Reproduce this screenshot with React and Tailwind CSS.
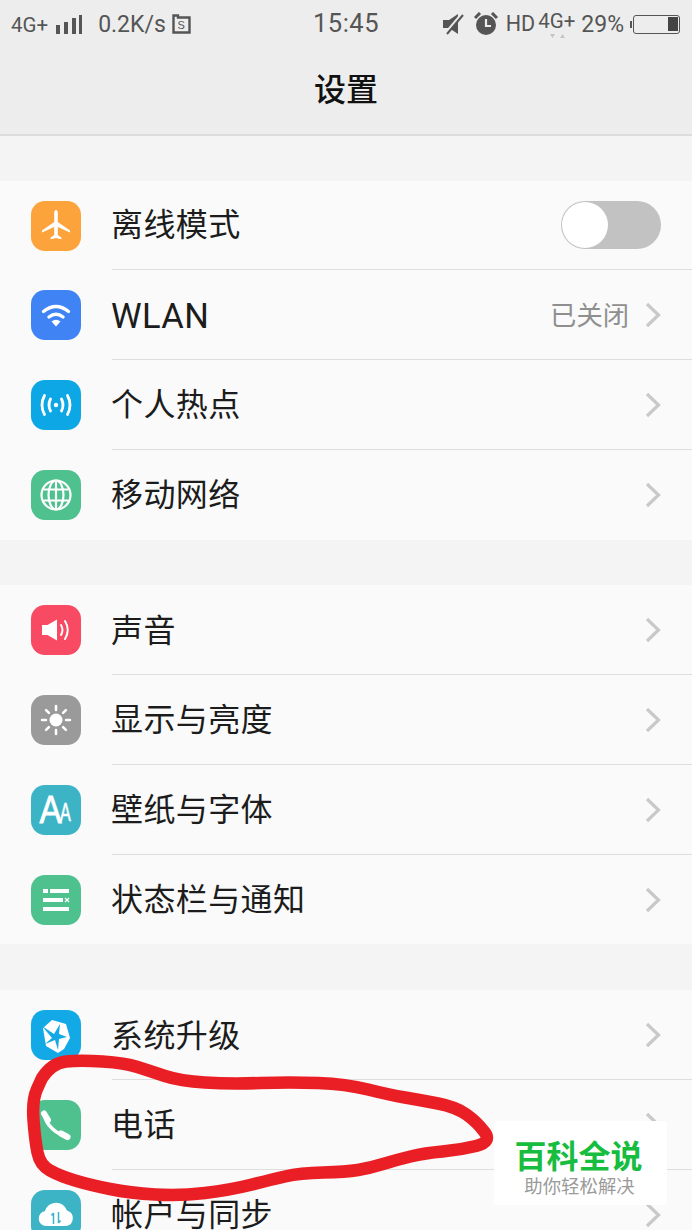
const font = { fontFamily: '"Noto Sans CJK SC", "Noto Sans", sans-serif' };

const Tile = ({ bg, children }) => (
  <div className={`w-[50px] h-[50px] rounded-[14px] shrink-0 ${bg}`}>
    <svg viewBox="0 0 50 50" width="50" height="50" className="block">{children}</svg>
  </div>
);

const Plane = () => (
  <Tile bg="bg-[#fda33b]">
    <path fill="#fff" d="M25 9c-1.200 0-1.800 1.600-1.800 3V21L11 29.500v2l12.200-5.500V34l-3.700 2.800v1.400L25 37l5.500 1.200v-1.400L26.800 34v-8L39 31.500v-2L26.800 21v-9c0-1.400-.6-3-1.800-3z" />
  </Tile>
);
const Wifi = () => (
  <Tile bg="bg-[#3f83f5]">
    <g fill="none" stroke="#fff" strokeWidth="3.400" strokeLinecap="round">
      <path d="M12.500 21.500Q25 11.500 37.500 21.500" />
      <path d="M18 27Q25 21.500 32 27" />
    </g>
    <path fill="#fff" d="M20.500 31.500Q25 28 29.500 31.500L25 36.500z" />
  </Tile>
);
const Hotspot = () => (
  <Tile bg="bg-[#0ea7e6]">
    <circle cx="25" cy="25" r="2.200" fill="#fff" />
    <g fill="none" stroke="#fff" strokeWidth="2.800" strokeLinecap="round">
      <path d="M19.500 19Q16.500 25 19.500 31" />
      <path d="M30.500 19Q33.500 25 30.500 31" />
      <path d="M13.500 15.500Q8.500 25 13.500 34.500" />
      <path d="M36.500 15.500Q41.500 25 36.500 34.500" />
    </g>
  </Tile>
);
const Globe = () => (
  <Tile bg="bg-[#4fc18e]">
    <g fill="none" stroke="#fff" strokeWidth="2.200">
      <circle cx="25" cy="25" r="14.500" />
      <ellipse cx="25" cy="25" rx="7.500" ry="14.500" />
      <path d="M25 10.500V39.500M12.500 19.500H37.500M12.500 30.500H37.500" />
    </g>
  </Tile>
);
const Sound = () => (
  <Tile bg="bg-[#f84a62]">
    <path fill="#fff" d="M11 20h5.500L26 14.500v21L16.500 30H11z" />
    <g fill="none" stroke="#fff" strokeWidth="2" strokeLinecap="round">
      <path d="M30 20Q33 25 30 30" />
      <path d="M34 16Q39.500 25 34 34" />
    </g>
  </Tile>
);
const Sun = () => (
  <Tile bg="bg-[#9a9a9a]">
    <circle cx="25" cy="25" r="6.500" fill="#fff" />
    <g stroke="#fff" strokeWidth="2.500" strokeLinecap="round">
      <path d="M25 11v4M25 35v4M11 25h4M35 25h4M15.100 15.100l2.800 2.800M32.100 32.100l2.800 2.800M15.100 34.900l2.800-2.800M32.100 17.900l2.800-2.800" />
    </g>
  </Tile>
);
const Fonts = () => (
  <Tile bg="bg-[#3cb4c6]">
    <text transform="translate(8.500 38) scale(0.85 1)" fill="#fff" stroke="#fff" strokeWidth="0.800" fontSize="39" fontFamily="Liberation Sans, sans-serif">A</text>
    <text transform="translate(29 36) scale(0.62 1)" fill="#fff" stroke="#fff" strokeWidth="0.600" fontSize="26" fontFamily="Liberation Sans, sans-serif">A</text>
  </Tile>
);
const Notify = () => (
  <Tile bg="bg-[#4fc18e]">
    <g fill="#fff">
      <rect x="12" y="14" width="5" height="4" />
      <rect x="19" y="14" width="19" height="4" />
      <rect x="12" y="23" width="20" height="4" />
      <rect x="12" y="32" width="26" height="4" />
    </g>
    <path d="M34 23l4 4M38 23l-4 4" stroke="#fff" strokeWidth="1.300" />
  </Tile>
);
const Upgrade = () => (
  <Tile bg="bg-[#13a9e6]">
    <path fill="#fff" d="M21 10l14 4 4 14-6 11-6 4-12-7-3-18z" strokeLinejoin="round" />
    <path fill="#13a9e6" d="M29 14l-1 10 8 3-8 2-1 11-3-10-10 4 7-6-10-12 12 8z" />
  </Tile>
);
const Phone = () => (
  <Tile bg="bg-[#4fc18e]">
    <path d="M13.500 15C15 25 25 34 35.500 36.500" fill="none" stroke="#fff" strokeWidth="3.500" strokeLinecap="round" />
    <path d="M13 13.500L17 20" stroke="#fff" strokeWidth="6" strokeLinecap="round" />
    <path d="M30 33.500L36.500 37" stroke="#fff" strokeWidth="6" strokeLinecap="round" />
  </Tile>
);
const Cloud = () => (
  <Tile bg="bg-[#3cb4c6]">
    <path fill="#fff" d="M15 36a7.500 7.500 0 0 1-1-14.900A11.500 11.500 0 0 1 36 20.500 8 8 0 0 1 35.500 36z" />
    <path d="M22.500 34V23M22.500 23l-2 2.500M27.500 22v11M27.500 33l2-2.500" stroke="#3cb4c6" strokeWidth="1.500" fill="none" />
  </Tile>
);

const Chevron = () => (
  <svg width="18" height="28" viewBox="0 0 18 28" className="block shrink-0">
    <path d="M3 3L14.500 14 3 25" fill="none" stroke="#c9c9c9" strokeWidth="3.200" />
  </svg>
);

const Row = ({ icon, label, last, right, h = 'h-[90px]', lift = 'mt-[-5px]' }) => (
  <div className={`flex items-center pl-[31px] ${h}`}>
    {icon}
    <div className={`ml-[31px] flex-1 h-full flex items-center pr-[30px] ${last ? '' : 'border-b border-[#dedede]'}`}>
      <span className={`flex-1 text-[32px] leading-none text-[#1c1c1c] tracking-[0.4px] ml-[-1px] ${lift}`}>{label}</span>
      {right ?? <Chevron />}
    </div>
  </div>
);

const Toggle = () => (
  <div className="w-[100px] h-[48px] mr-px rounded-full bg-[#c2c2c2] flex items-center">
    <div className="w-[46px] h-[46px] ml-px rounded-full bg-white" />
  </div>
);

const Section = ({ children }) => <div className="bg-[#fafafa] flex flex-col">{children}</div>;

const StatusBar = () => (
  <div className="grid grid-cols-[1fr_auto_1fr] items-center h-[48px] text-[#555]" style={{ fontFamily: 'Roboto, sans-serif' }}>
    <div className="flex items-center pl-[11px]">
      <span className="text-[20.500px] leading-none mt-[3px]">4G+</span>
      <svg width="28" height="20" viewBox="0 0 28 20" className="ml-[7px]">
        <path fill="#555" d="M1 11h4v9H1zM9 8h4v12H9zM17 4h4v16h-4zM24 1h3v19h-3z" />
      </svg>
      <span className="text-[23px] leading-none ml-[15px]">0.2K/s</span>
      <svg width="19" height="20" viewBox="0 0 19 20" className="ml-[6px] mb-[1px]">
        <path d="M1.500 1.500H6V3.500H17.500V18.500H1.500z" fill="none" stroke="#555" strokeWidth="2.400" />
        <text x="5.500" y="14.500" fontSize="11" fill="#555" fontFamily="Liberation Sans, sans-serif">S</text>
      </svg>
    </div>
    <span className="text-[25.500px] leading-none tracking-[0.500px]">15:45</span>
    <div className="flex items-center justify-end pr-[12px]">
      <svg width="22" height="22" viewBox="0 0 22 22" className="mr-[10px]">
        <path fill="#555" d="M1 7h6l9-6v20l-9-6H1z" />
        <path d="M3 21L20 1" stroke="#ededed" strokeWidth="3" />
        <path d="M5 21L21 2" stroke="#555" strokeWidth="2" />
      </svg>
      <svg width="24" height="24" viewBox="0 0 24 24" className="mr-[8px]">
        <circle cx="12" cy="13" r="10" fill="#555" />
        <path d="M12 7v7h5" fill="none" stroke="#ededed" strokeWidth="2.200" />
        <path d="M1 6l5-5M23 6l-5-5" stroke="#555" strokeWidth="3" />
      </svg>
      <span className="text-[21.500px] leading-none">HD</span>
      <div className="relative ml-[3px] mb-[6px]">
        <span className="block text-[20.500px] leading-none">4G+</span>
        <svg width="16" height="6" viewBox="0 0 16 6" className="absolute left-[11px] top-[22px]">
          <path d="M1 1h5L3.500 5zM11 5h5l-2.500-4z" fill="#c4c4c4" />
        </svg>
      </div>
      <span className="text-[23px] leading-none ml-[6px]">29%</span>
      <div className="relative ml-[9px] w-[47px] h-[19px] border-[1.500px] border-[#555] rounded-[3px] flex justify-end items-center pr-[1px]">
        <div className="absolute -left-[4px] top-[5px] w-[2px] h-[7px] bg-[#555]" />
        <div className="w-[10px] h-[14px] bg-[#444]" />
      </div>
    </div>
  </div>
);

const strokePts = [
  [42, 1078], [52, 1063], [80, 1060], [125, 1063], [150, 1071], [180, 1081], [230, 1084], [290, 1082], [346, 1084],
  [390, 1095], [420, 1100], [456, 1107], [477, 1122], [492, 1142], [460, 1150], [425, 1153], [396, 1160], [370, 1168],
  [346, 1172], [300, 1173], [270, 1180], [230, 1190], [180, 1196], [130, 1193], [90, 1185], [60, 1176], [40, 1165],
  [35, 1140], [32, 1100], [42, 1078],
];
const strokePath = strokePts.reduce((d, p, i, a) => {
  if (i === 0) return `M${p[0]} ${p[1]}`;
  if (i === a.length - 1) return `${d} L${p[0]} ${p[1]}`;
  const n = a[i + 1];
  return `${d} Q${p[0]} ${p[1]} ${(p[0] + n[0]) / 2} ${(p[1] + n[1]) / 2}`;
}, '');

export default function App() {
  return (
    <div className="relative h-[1230px] w-[692px] overflow-hidden bg-[#f4f4f4]" style={font}>
      <header className="h-[136px] bg-[#ededed] border-b-2 border-[#dcdcdc] flex flex-col">
        <StatusBar />
        <div className="flex justify-center pt-[23px]">
          <h1 className="text-[32px] leading-none font-medium text-[#111]">设置</h1>
        </div>
      </header>
      <div className="h-[45px]" />
      <Section>
        <Row h="h-[89px]" lift="mt-[-6px]" icon={<Plane />} label="离线模式" right={<Toggle />} />
        <Row lift="mt-[3px]" icon={<Wifi />} label={<span className="text-[34.500px]" style={{ fontFamily: 'Roboto, sans-serif' }}>WLAN</span>} right={
          <div className="flex items-center gap-[15px]"><span className="text-[26.300px] leading-none text-[#8f8f8f]">已关闭</span><Chevron /></div>
        } />
        <Row icon={<Hotspot />} label="个人热点" />
        <Row last lift="mt-[-6px]" icon={<Globe />} label="移动网络" />
      </Section>
      <div className="h-[45px]" />
      <Section>
        <Row lift="mt-[-4px]" icon={<Sound />} label="声音" />
        <Row icon={<Sun />} label="显示与亮度" />
        <Row icon={<Fonts />} label="壁纸与字体" />
        <Row last h="h-[89px]" lift="mt-[-6px]" icon={<Notify />} label="状态栏与通知" />
      </Section>
      <div className="h-[46px]" />
      <Section>
        <Row lift="mt-[-4px]" icon={<Upgrade />} label="系统升级" />
        <Row icon={<Phone />} label="电话" />
        <Row icon={<Cloud />} label="帐户与同步" />
      </Section>

      <svg width="692" height="1230" viewBox="0 0 692 1230" className="absolute inset-0 pointer-events-none">
        <path d={strokePath} fill="none" stroke="#ea1f25" strokeWidth="12.500" strokeLinejoin="round" strokeLinecap="round" />
      </svg>

      <div className="absolute left-[494px] top-[1121px] w-[173px] h-[84px] bg-white rounded-[3px] flex flex-col items-center pt-[15px]">
        <span className="text-[32px] leading-[36px] font-bold text-[#16bd3e] ml-[-4px]">百科全说</span>
        <span className="text-[18.400px] leading-[22px] text-[#9a9a9a] mt-[2px] ml-[-2px]">助你轻松解决</span>
      </div>
    </div>
  );
}
